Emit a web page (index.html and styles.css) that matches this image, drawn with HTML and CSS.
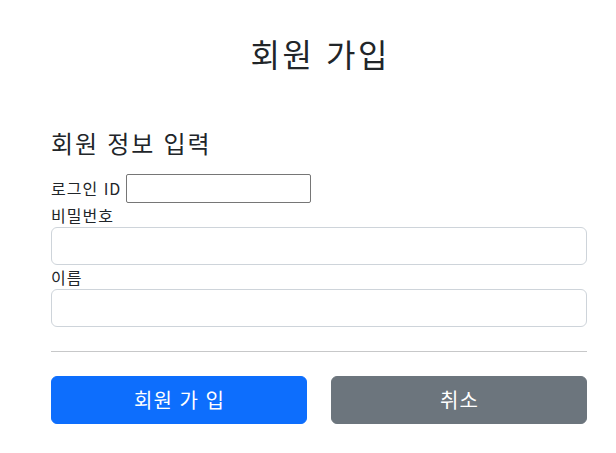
FILE: index.html
```html
<!DOCTYPE html>
<html lang="ko">
<head>
<meta charset="utf-8">
<title>회원 가입</title>
<link rel="stylesheet" href="styles.css">
</head>
<body>
<div class="container">
  <div class="page-header">
    <h2 class="page-title">회원 가입</h2>
  </div>
  <h4 class="section-title">회원 정보 입력</h4>
  <form class="join-form">
    <div class="field-inline">
      <label class="label" for="loginId">로그인 ID</label>
      <input class="plain-input" type="text" id="loginId">
    </div>
    <div class="field">
      <label class="label" for="password">비밀번호</label>
      <input class="form-control" type="password" id="password">
    </div>
    <div class="field">
      <label class="label" for="name">이름</label>
      <input class="form-control" type="text" id="name">
    </div>
    <hr class="divider">
    <div class="actions">
      <button class="btn btn-primary" type="submit">회원 가 입</button>
      <button class="btn btn-secondary" type="button">취소</button>
    </div>
  </form>
</div>
</body>
</html>
```
FILE: styles.css
```css
* { box-sizing: border-box; }
html, body { margin: 0; padding: 0; background: #fff; }
body {
  font-family: "Noto Sans CJK KR", "Noto Sans", sans-serif;
  font-size: 16px;
  line-height: 1.5;
  color: #212529;
}
.container {
  width: 560px;
  margin-left: 39px;
  padding: 0 12px;
}
.page-header {
  padding: 34px 0 48px;
  text-align: center;
}
.page-title {
  margin: 0 0 8px;
  font-size: 32px;
  font-weight: 400;
  line-height: 38px;
  letter-spacing: 2.6px;
  text-indent: 2.6px;
}
.section-title {
  margin: 0 0 16px;
  font-size: 24px;
  font-weight: 400;
  line-height: 29px;
  letter-spacing: 1.8px;
}
.join-form { margin: 0; }
.field-inline {
  display: flex;
  align-items: center;
  gap: 5px;
  height: 30px;
}
.label {
  display: inline-block;
  line-height: 24px;
  letter-spacing: 1px;
}
.plain-input {
  width: 185px;
  height: 29px;
  border: 1px solid #767676;
  border-radius: 2px;
  padding: 1px 2px;
  font: inherit;
}
.form-control {
  display: block;
  width: 100%;
  height: 38px;
  padding: 6px 12px;
  font: inherit;
  color: #212529;
  border: 1px solid #ced4da;
  border-radius: 6px;
  background: #fff;
}
.divider {
  margin: 24px 0;
  border: 0;
  border-top: 1px solid #212529;
  opacity: .25;
}
.actions {
  display: grid;
  grid-template-columns: 1fr 1fr;
  column-gap: 24px;
}
.btn {
  height: 48px;
  border: 1px solid transparent;
  border-radius: 6px;
  font: inherit;
  font-size: 20px;
  line-height: 30px;
  color: #fff;
  padding: 8px 16px;
  letter-spacing: 1px;
  text-indent: 1px;
}
.btn-primary { background: #0d6efd; border-color: #0d6efd; }
.btn-secondary { background: #6c757d; border-color: #6c757d; }
```
